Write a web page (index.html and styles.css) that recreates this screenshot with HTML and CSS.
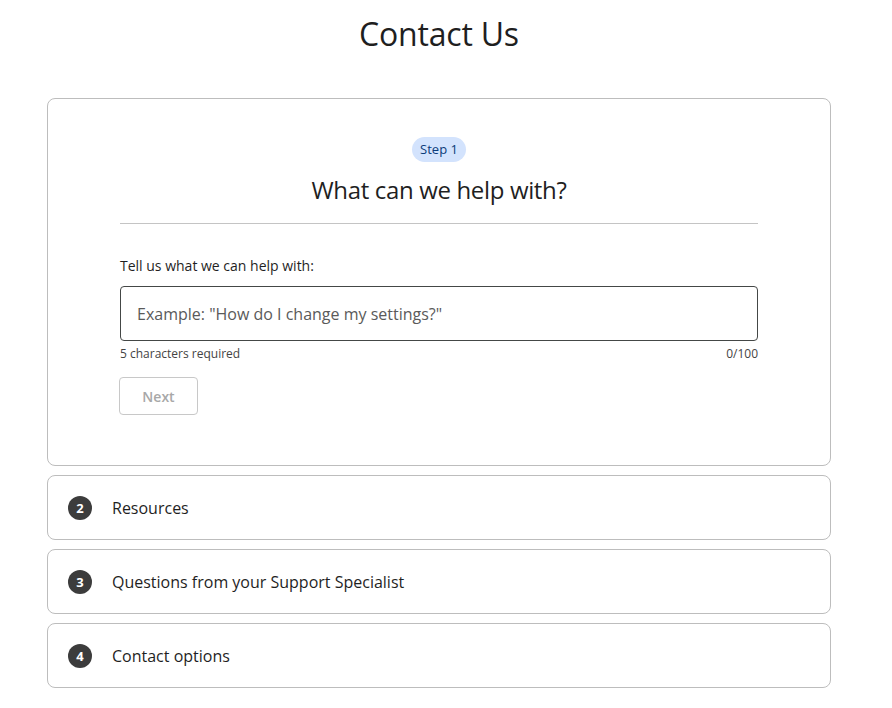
FILE: index.html
```html
<!DOCTYPE html>
<html>
<head>
<meta charset="utf-8">
<link rel="stylesheet" href="styles.css">
</head>
<body>
<div class="page">
  <h1 class="title">Contact Us</h1>
  <div class="steps">
    <section class="card card-open">
      <div class="pill">Step 1</div>
      <h2 class="heading">What can we help with?</h2>
      <div class="divider"></div>
      <label class="label">Tell us what we can help with:</label>
      <div class="input">Example: "How do I change my settings?"</div>
      <div class="helper"><span>5 characters required</span><span>0/100</span></div>
      <div class="btn">Next</div>
    </section>
    <section class="card card-closed">
      <span class="num">2</span><span class="step-title">Resources</span>
    </section>
    <section class="card card-closed">
      <span class="num">3</span><span class="step-title">Questions from your Support Specialist</span>
    </section>
    <section class="card card-closed">
      <span class="num">4</span><span class="step-title">Contact options</span>
    </section>
  </div>
</div>
</body>
</html>
```
FILE: styles.css
```css
* { box-sizing: border-box; }
body {
  margin: 0;
  background: #fff;
  font-family: "Open Sans", "Roboto", sans-serif;
  color: #1f1f1f;
}
.page {
  width: 784px;
  margin-left: 47px;
  padding-top: 14px;
}
.title {
  margin: 0;
  text-align: center;
  font-size: 32px;
  font-weight: 400;
  line-height: 40px;
  letter-spacing: -0.2px;
  color: #1f1f1f;
}
.steps {
  margin-top: 44px;
  display: flex;
  flex-direction: column;
  gap: 9px;
}
.card {
  border: 1px solid #bdbdbd;
  border-radius: 8px;
  background: #fff;
}
.card-open {
  padding: 38px 72px 50px 72px;
  display: flex;
  flex-direction: column;
}
.pill {
  align-self: center;
  height: 25px;
  line-height: 25px;
  padding: 0 8px;
  border-radius: 13px;
  background: #d3e3fd;
  color: #0b3b7a;
  font-size: 13px;
}
.heading {
  margin: 12px 0 0;
  text-align: center;
  font-size: 24px;
  font-weight: 400;
  line-height: 32px;
  letter-spacing: -0.35px;
}
.divider {
  margin-top: 17px;
  height: 1px;
  background: #c4c4c4;
}
.label {
  margin-top: 32px;
  font-size: 14px;
  line-height: 20px;
  color: #1f1f1f;
}
.input {
  margin-top: 10px;
  height: 55px;
  border: 1px solid #444746;
  border-radius: 4px;
  padding: 0 16px;
  display: flex;
  align-items: center;
  font-size: 16px;
  color: #5a5a5a;
}
.helper {
  margin-top: 5px;
  display: flex;
  justify-content: space-between;
  font-size: 12px;
  line-height: 16px;
  color: #444;
}
.btn {
  margin-top: 15px;
  margin-left: -1px;
  align-self: flex-start;
  width: 79px;
  height: 38px;
  border: 1px solid #c8c8c8;
  border-radius: 4px;
  display: flex;
  align-items: center;
  justify-content: center;
  font-size: 14px;
  font-weight: 600;
  color: #a8a8a8;
}
.card-closed {
  height: 65px;
  display: flex;
  align-items: center;
  padding-left: 20px;
}
.num {
  width: 24px;
  height: 24px;
  border-radius: 50%;
  background: #3c3c3c;
  color: #fff;
  font-size: 13px;
  font-weight: 700;
  display: flex;
  align-items: center;
  justify-content: center;
}
.step-title {
  margin-left: 20px;
  font-size: 16px;
  font-weight: 500;
  color: #1f1f1f;
}
```
